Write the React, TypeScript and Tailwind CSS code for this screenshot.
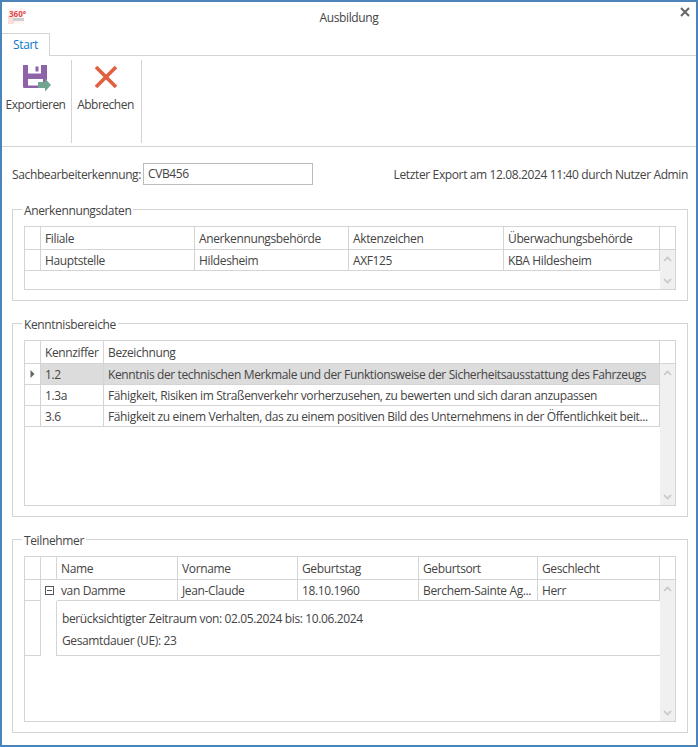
const line = 'border-[#d4d4d4]'

function Chevron({ up }: { up?: boolean }) {
  return (
    <svg width="9" height="6" viewBox="0 0 9 6" fill="none" stroke="#c6c6c6" strokeWidth="1.6">
      <path d={up ? 'M1 5 L4.5 1.5 L8 5' : 'M1 1 L4.5 4.5 L8 1'} />
    </svg>
  )
}

function Scrollbar() {
  return (
    <div className="w-[15px] flex-none bg-[#f0f0f0] flex flex-col items-center justify-between pt-[6px] pb-[5px]">
      <Chevron up />
      <Chevron />
    </div>
  )
}

function Cell({ w, children, className = '' }: { w: string; children?: React.ReactNode; className?: string }) {
  return (
    <div className={`${w} flex-none h-full border-r ${line} pl-[4px] pr-[2px] pt-[1px] flex items-center overflow-hidden whitespace-nowrap ${className}`}>
      {children}
    </div>
  )
}

function Group({ title, height, className = '', children }: { title: string; height: string; className?: string; children: React.ReactNode }) {
  return (
    <fieldset className={`${height} ${className} border ${line} px-[11px]`}>
      <legend className="-ml-[2px] px-[2px] h-[16px] leading-[20px]">{title}</legend>
      {children}
    </fieldset>
  )
}

function RibbonButton({ label, width, children }: { label: string; width: string; children: React.ReactNode }) {
  return (
    <div className={`${width} flex-none h-full border-r ${line} flex flex-col items-center`}>
      <div className="h-[32px] mt-[3px] flex items-center justify-center">{children}</div>
      <div className="mt-[2px] -ml-[2px] leading-[16px] whitespace-nowrap tracking-[-0.5px]">{label}</div>
    </div>
  )
}

export default function App() {
  return (
    <div className="w-[698px] h-[747px] bg-white border-2 border-[#4a84b8] overflow-hidden flex flex-col text-[12px] text-[#444] font-['Open_Sans',sans-serif] tracking-[-0.37px]">
      {/* title bar */}
      <div className="h-[31px] flex-none flex items-center relative">
        <div className="absolute left-[6px] top-[6px] w-[16px] h-[16px] bg-[#fef5f5]">
          <div className="absolute left-0 top-[8px] w-[6px] h-[8px] bg-[#fbdfdf]" />
          <div className="absolute left-[5px] top-[10px] w-[11px] h-[3px] bg-[#cfcfcf]" />
          <span className="absolute left-[1px] top-[2px] text-[8px] leading-[8px] font-bold tracking-normal text-[#e2464c]">360°</span>
        </div>
        <div className="w-full text-center">Ausbildung</div>
        <svg className="absolute right-[6px] top-[5px]" width="10" height="10" viewBox="0 0 10 10" stroke="#666" strokeWidth="2">
          <path d="M1 1 L9 9 M9 1 L1 9" />
        </svg>
      </div>

      {/* tab strip */}
      <div className={`h-[23px] flex-none border-b ${line} flex items-end`}>
        <div className={`w-[48px] h-[23px] -mb-[1px] bg-white border-t border-r ${line} flex items-center justify-center text-[#0a78c8]`}>
          Start
        </div>
      </div>

      {/* ribbon */}
      <div className={`h-[91px] flex-none border-b ${line} flex pt-[4px] pb-[3px]`}>
        <RibbonButton label="Exportieren" width="w-[70px]">
          <svg width="30" height="30" viewBox="0 0 30 30">
            <path d="M1 1 H25 V24 H2.5 A1.5 1.5 0 0 1 1 22.5 Z" fill="#8e63a9" />
            <rect x="6" y="1" width="13" height="8.5" fill="#fff" />
            <rect x="13.5" y="2.5" width="3" height="5" fill="#8e63a9" />
            <rect x="6" y="15" width="15" height="6.5" fill="#fff" />
            <path d="M16 18 H23 V14.5 L29 21 L23 27.5 V24 H16 Z" fill="#70a691" />
          </svg>
        </RibbonButton>
        <RibbonButton label="Abbrechen" width="w-[70px]">
          <svg className="-mt-[4px] -ml-[2px]" width="24" height="24" viewBox="0 0 24 24" stroke="#e0603f" strokeWidth="3.6">
            <path d="M2 2 L22 22 M22 2 L2 22" />
          </svg>
        </RibbonButton>
      </div>

      {/* content */}
      <div className="flex-1 pl-[10px] pr-[8px] flex flex-col">
        <div className="h-[22px] mt-[16px] flex-none flex items-center">
          <span className="whitespace-nowrap pt-[1px]">Sachbearbeiterkennung:</span>
          <div className="ml-auto flex-none w-[545px] flex items-center justify-between">
            <div className="w-[170px] h-[22px] border border-[#bcbcbc] px-[4px] flex items-center">CVB456</div>
            <span className="whitespace-nowrap pt-[1px]">Letzter Export am 12.08.2024 11:40 durch Nutzer Admin</span>
          </div>
        </div>

        <Group title="Anerkennungsdaten" height="h-[100px]" className="mt-[16px]">
          <div className={`mt-[9px] w-[652px] h-[64px] border ${line} flex flex-col`}>
            <div className={`h-[23px] flex-none border-b ${line} flex`}>
              <Cell w="w-[16px]" />
              <Cell w="w-[154px]">Filiale</Cell>
              <Cell w="w-[154px]">Anerkennungsbehörde</Cell>
              <Cell w="w-[155px]">Aktenzeichen</Cell>
              <Cell w="w-[156px]">Überwachungsbehörde</Cell>
            </div>
            <div className="flex-1 flex min-h-0">
              <div className="w-[635px] flex-none">
                <div className={`h-[21px] border-b ${line} flex`}>
                  <Cell w="w-[16px]" />
                  <Cell w="w-[154px]">Hauptstelle</Cell>
                  <Cell w="w-[154px]">Hildesheim</Cell>
                  <Cell w="w-[155px]">AXF125</Cell>
                  <Cell w="w-[156px]">KBA Hildesheim</Cell>
                </div>
              </div>
              <Scrollbar />
            </div>
          </div>
        </Group>

        <Group title="Kenntnisbereiche" height="h-[202px]" className="mt-[14px]">
          <div className={`mt-[9px] w-[652px] h-[166px] border ${line} flex flex-col`}>
            <div className={`h-[23px] flex-none border-b ${line} flex`}>
              <Cell w="w-[16px]" />
              <Cell w="w-[63px]">Kennziffer</Cell>
              <Cell w="w-[556px]">Bezeichnung</Cell>
            </div>
            <div className="flex-1 flex min-h-0">
              <div className="w-[635px] flex-none">
                <div className={`h-[21px] border-b ${line} flex`}>
                  <Cell w="w-[16px]" className="justify-center !pl-0 !pr-0 !pt-0">
                    <svg width="5" height="8" viewBox="0 0 5 8"><path d="M0.5 0 L4.5 4 L0.5 8 Z" fill="#666" /></svg>
                  </Cell>
                  <Cell w="w-[63px]" className="bg-[#dcdcdc]">1.2</Cell>
                  <Cell w="w-[556px]" className="bg-[#dcdcdc]">Kenntnis der technischen Merkmale und der Funktionsweise der Sicherheitsausstattung des Fahrzeugs</Cell>
                </div>
                <div className={`h-[21px] border-b ${line} flex`}>
                  <Cell w="w-[16px]" />
                  <Cell w="w-[63px]">1.3a</Cell>
                  <Cell w="w-[556px]">Fähigkeit, Risiken im Straßenverkehr vorherzusehen, zu bewerten und sich daran anzupassen</Cell>
                </div>
                <div className={`h-[21px] border-b ${line} flex`}>
                  <Cell w="w-[16px]" />
                  <Cell w="w-[63px]">3.6</Cell>
                  <Cell w="w-[556px]">Fähigkeit zu einem Verhalten, das zu einem positiven Bild des Unternehmens in der Öffentlichkeit beit...</Cell>
                </div>
              </div>
              <Scrollbar />
            </div>
          </div>
        </Group>

        <Group title="Teilnehmer" height="h-[202px]" className="mt-[14px]">
          <div className={`mt-[9px] w-[652px] h-[166px] border ${line} flex flex-col`}>
            <div className={`h-[23px] flex-none border-b ${line} flex`}>
              <Cell w="w-[16px]" />
              <Cell w="w-[16px]" />
              <Cell w="w-[121px]">Name</Cell>
              <Cell w="w-[120px]">Vorname</Cell>
              <Cell w="w-[121px]">Geburtstag</Cell>
              <Cell w="w-[119px]">Geburtsort</Cell>
              <Cell w="w-[122px]">Geschlecht</Cell>
            </div>
            <div className="flex-1 flex min-h-0">
              <div className="w-[635px] flex-none">
                <div className="h-[21px] flex">
                  <Cell w="w-[16px]" className={`border-b ${line}`} />
                  <div className="w-[16px] flex-none h-full flex items-center justify-center">
                    <svg width="9" height="9" viewBox="0 0 9 9" fill="none" stroke="#555">
                      <rect x="0.5" y="0.5" width="8" height="8" />
                      <path d="M2 4.5 H7" />
                    </svg>
                  </div>
                  <Cell w="w-[121px]" className={`border-b ${line}`}>van Damme</Cell>
                  <Cell w="w-[120px]" className={`border-b ${line}`}>Jean-Claude</Cell>
                  <Cell w="w-[121px]" className={`border-b ${line}`}>18.10.1960</Cell>
                  <Cell w="w-[119px]" className={`border-b ${line}`}>Berchem-Sainte Ag...</Cell>
                  <Cell w="w-[122px]" className={`border-b ${line}`}>Herr</Cell>
                </div>
                <div className="h-[55px] flex">
                  <div className={`w-[16px] flex-none border-r border-b ${line}`} />
                  <div className="w-[15px] flex-none" />
                  <div className={`flex-1 border-l border-b ${line} pl-[5px] pt-[7px] leading-[22px]`}>
                    <div>berücksichtigter Zeitraum von: 02.05.2024 bis: 10.06.2024</div>
                    <div>Gesamtdauer (UE): 23</div>
                  </div>
                </div>
              </div>
              <Scrollbar />
            </div>
          </div>
        </Group>
      </div>
    </div>
  )
}
